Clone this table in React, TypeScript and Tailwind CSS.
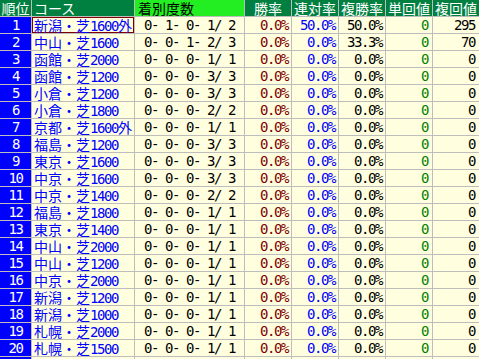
const rows: [string, string, string, string, string, string, string, string][] = [
  ['1', '新潟・芝|1600|外', ' 0- 1- 0- 1/ 2', '0.0%', '50.0%', '50.0%', '0', '295'],
  ['2', '中山・芝|1600|', ' 0- 0- 1- 2/ 3', '0.0%', '0.0%', '33.3%', '0', '70'],
  ['3', '函館・芝|2000|', ' 0- 0- 0- 1/ 1', '0.0%', '0.0%', '0.0%', '0', '0'],
  ['4', '函館・芝|1200|', ' 0- 0- 0- 3/ 3', '0.0%', '0.0%', '0.0%', '0', '0'],
  ['5', '小倉・芝|1200|', ' 0- 0- 0- 3/ 3', '0.0%', '0.0%', '0.0%', '0', '0'],
  ['6', '小倉・芝|1800|', ' 0- 0- 0- 2/ 2', '0.0%', '0.0%', '0.0%', '0', '0'],
  ['7', '京都・芝|1600|外', ' 0- 0- 0- 1/ 1', '0.0%', '0.0%', '0.0%', '0', '0'],
  ['8', '福島・芝|1200|', ' 0- 0- 0- 3/ 3', '0.0%', '0.0%', '0.0%', '0', '0'],
  ['9', '東京・芝|1600|', ' 0- 0- 0- 3/ 3', '0.0%', '0.0%', '0.0%', '0', '0'],
  ['10', '中京・芝|1600|', ' 0- 0- 0- 3/ 3', '0.0%', '0.0%', '0.0%', '0', '0'],
  ['11', '中京・芝|1400|', ' 0- 0- 0- 2/ 2', '0.0%', '0.0%', '0.0%', '0', '0'],
  ['12', '福島・芝|1800|', ' 0- 0- 0- 1/ 1', '0.0%', '0.0%', '0.0%', '0', '0'],
  ['13', '東京・芝|1400|', ' 0- 0- 0- 1/ 1', '0.0%', '0.0%', '0.0%', '0', '0'],
  ['14', '中山・芝|2000|', ' 0- 0- 0- 1/ 1', '0.0%', '0.0%', '0.0%', '0', '0'],
  ['15', '中山・芝|1200|', ' 0- 0- 0- 1/ 1', '0.0%', '0.0%', '0.0%', '0', '0'],
  ['16', '中京・芝|2000|', ' 0- 0- 0- 1/ 1', '0.0%', '0.0%', '0.0%', '0', '0'],
  ['17', '新潟・芝|1200|', ' 0- 0- 0- 1/ 1', '0.0%', '0.0%', '0.0%', '0', '0'],
  ['18', '新潟・芝|1000|', ' 0- 0- 0- 1/ 1', '0.0%', '0.0%', '0.0%', '0', '0'],
  ['19', '札幌・芝|2000|', ' 0- 0- 0- 1/ 1', '0.0%', '0.0%', '0.0%', '0', '0'],
  ['20', '札幌・芝|1500|', ' 0- 0- 0- 1/ 1', '0.0%', '0.0%', '0.0%', '0', '0'],
];

const jp = 'font-["Noto_Sans_CJK_JP",sans-serif]';
const num = 'font-["DejaVu_Sans_Mono",monospace] tracking-[-1.43px] whitespace-pre';

function Course({ text, selected }: { text: string; selected: boolean }) {
  const [name, dist, suffix] = text.split('|');
  return (
    <div
      className={`bg-[#ffffe0] pl-[2px] text-[#0000ff] whitespace-nowrap overflow-hidden ${jp} ${
        selected ? 'shadow-[inset_0_0_0_1px_#800000]' : ''
      }`}
    >
      {name}
      <span className={num}>{dist}</span>
      {suffix}
    </div>
  );
}

export default function App() {
  return (
    <div className="w-[479px] h-[359px] overflow-hidden bg-[#bdbdbd] text-[14px] leading-[16px]">
      <div className="grid grid-cols-[31px_102px_109px_46px_46px_46px_46px_46px] auto-rows-[16px] gap-px">
        <div className={`bg-[#008040] text-white text-center ${jp}`}>順位</div>
        <div className={`bg-[#008040] text-white pl-[2px] ${jp}`}>コース</div>
        <div className={`bg-[#22ee22] text-black pl-[3px] ${jp}`}>着別度数</div>
        <div className={`bg-[#008040] text-white text-center ${jp}`}>勝率</div>
        <div className={`bg-[#008040] text-white text-center ${jp}`}>連対率</div>
        <div className={`bg-[#008040] text-white text-center ${jp}`}>複勝率</div>
        <div className={`bg-[#008040] text-white text-center ${jp}`}>単回値</div>
        <div className={`bg-[#008040] text-white text-center ${jp}`}>複回値</div>

        {rows.map((r, i) => (
          <div key={r[0]} className="contents">
            <div className={`bg-[#0000ff] text-white text-center ${num}`}>{r[0]}</div>
            <Course text={r[1]} selected={i === 0} />
            <div className={`bg-[#ffffe0] text-black pl-[2px] ${num}`}>{r[2]}</div>
            <div className={`bg-[#ffffe0] text-[#800000] text-right pr-[3px] ${num}`}>{r[3]}</div>
            <div className={`bg-[#ffffe0] text-[#0000ff] text-right pr-[3px] ${num}`}>{r[4]}</div>
            <div className={`bg-[#ffffe0] text-black text-right pr-[3px] ${num}`}>{r[5]}</div>
            <div className={`bg-[#ffffe0] text-[#008000] text-right pr-[4px] ${num}`}>{r[6]}</div>
            <div className={`bg-[#ffffe0] text-black text-right pr-[4px] ${num}`}>{r[7]}</div>
          </div>
        ))}

        <div className="bg-[#0000ff]" />
        <div className="bg-[#ffffe0]" />
        <div className="bg-[#ffffe0]" />
        <div className="bg-[#ffffe0]" />
        <div className="bg-[#ffffe0]" />
        <div className="bg-[#ffffe0]" />
        <div className="bg-[#ffffe0]" />
        <div className="bg-[#ffffe0]" />
      </div>
    </div>
  );
}
